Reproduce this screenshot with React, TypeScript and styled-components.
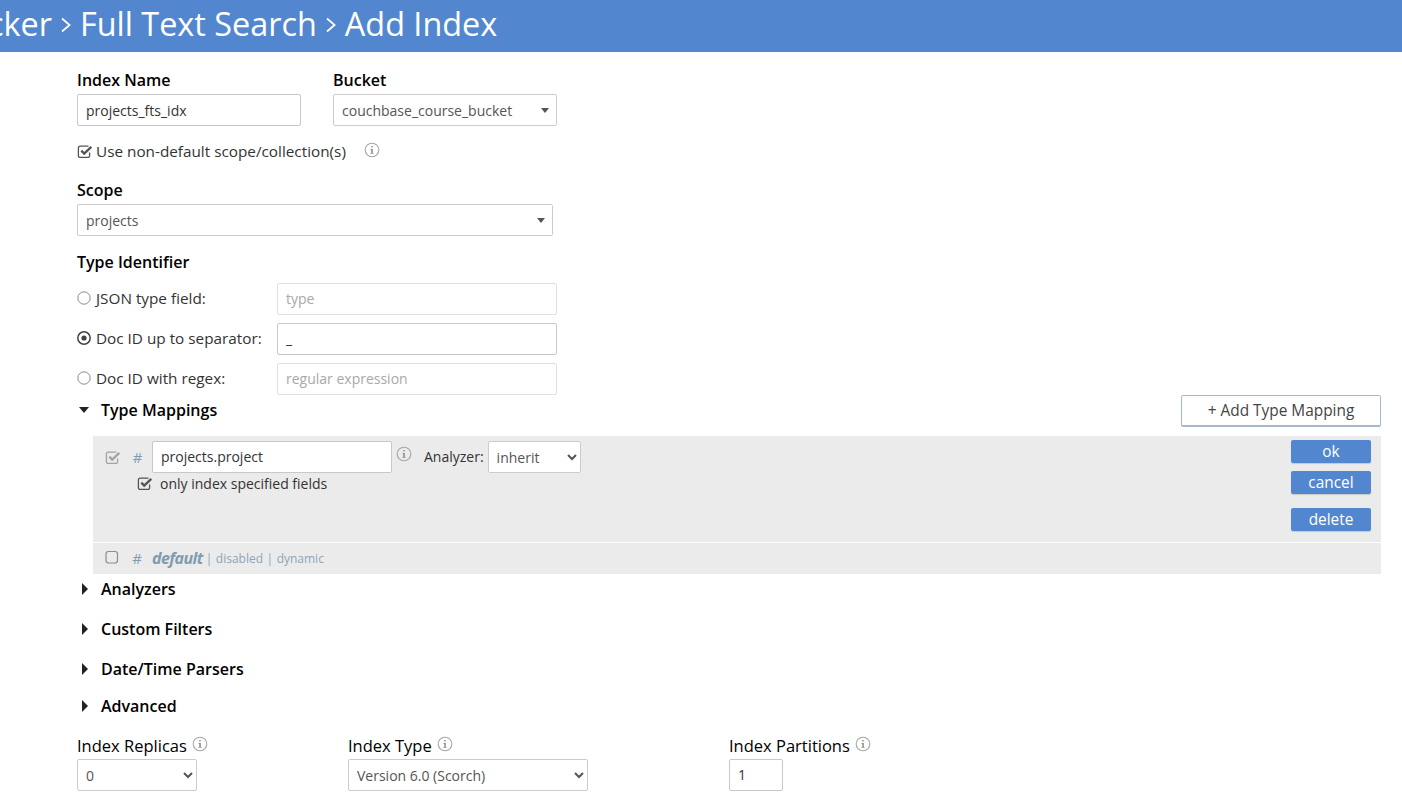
import { ReactNode } from "react";
import styled, { createGlobalStyle } from "styled-components";

const GlobalStyle = createGlobalStyle`
  html, body {
    margin: 0;
    padding: 0;
    background: #fff;
    overflow: hidden;
  }
  body {
    font-family: "Open Sans", "Liberation Sans", sans-serif;
    font-size: 14px;
    color: #333;
  }
  * {
    box-sizing: border-box;
  }
`;

const Page = styled.div`
  width: 1402px;
  height: 807px;
  overflow: hidden;
`;
const Header = styled.header`
  height: 52px;
  background-color: #5287d0;
  overflow: hidden;
  display: flex;
  align-items: flex-start;
`;
const Title = styled.h1`
  margin: -3px 0 0 -12px;
  font-size: 32.4px;
  font-weight: 400;
  line-height: 52px;
  color: #fff;
  white-space: nowrap;
  display: flex;
  align-items: center;
`;
const Crumb = styled.svg`
  width: 10px;
  height: 18px;
  margin: 3px 9px 0 9px;
`;
const Form = styled.main`
  padding: 18px 21px 0 77px;
  position: relative;
`;
const Label = styled.label`
  display: flex;
  align-items: flex-start;
  gap: 4px;
  height: 24px;
  font-size: 16px;
  line-height: 20px;
  font-weight: 600;
  color: #000;
`;
const Row = styled.div<{ $gap?: number }>`
  display: flex;
  gap: ${(p) => p.$gap ?? 0}px;
`;
const Field = styled.div<{ $width: number }>`
  width: ${(p) => p.$width}px;
  flex: none;
`;
const Input = styled.input<{ $width?: number; $strong?: boolean; $centered?: boolean }>`
  display: block;
  width: ${(p) => (p.$width ? `${p.$width}px` : "100%")};
  height: 32px;
  padding: 0 8px ${(p) => (p.$centered ? 0 : 2)}px;
  background: #fff;
  border: 1px solid ${(p) => (p.$strong ? "#c8c8c8" : "#e0e0e0")};
  border-radius: 2px;
  font: 14px "Open Sans", sans-serif;
  color: #333;
  &::placeholder {
    color: #a8a8a8;
    opacity: 1;
  }
`;
const SelectBox = styled.div<{ $width: number }>`
  position: relative;
  width: ${(p) => p.$width}px;
  height: 32px;
  padding: 0 8px;
  border: 1px solid #ccc;
  border-radius: 2px;
  font-size: 14px;
  line-height: 31px;
  color: #555;
  &::after {
    content: "";
    position: absolute;
    right: 7px;
    top: 13px;
    border-top: 5px solid #555;
    border-left: 4px solid transparent;
    border-right: 4px solid transparent;
  }
`;
const NativeSelect = styled.select<{ $width: number }>`
  display: block;
  width: ${(p) => p.$width}px;
  height: 32px;
  padding: 0 4px;
  background: #fff;
  border: 1px solid #ccc;
  border-radius: 2px;
  font: 14px "Open Sans", sans-serif;
  color: #555;
`;
const CheckLine = styled.div`
  display: flex;
  align-items: center;
  height: 24px;
  margin-top: 13px;
  color: #333;
  font-size: 15.3px;
  gap: 3px;
`;
const InfoSvg = styled.svg<{ $left?: number; $up?: number }>`
  width: 16px;
  height: 16px;
  flex: none;
  margin-left: ${(p) => p.$left ?? 0}px;
  margin-top: ${(p) => -(p.$up ?? 0)}px;
`;
const ScopeLabel = styled(Label)`
  margin-top: 17px;
`;
const TypeHeading = styled(Label)`
  margin-top: 16px;
  height: 31px;
`;
const RadioGroup = styled.div`
  display: flex;
  flex-direction: column;
  gap: 8px;
`;
const RadioRow = styled.div`
  display: flex;
  align-items: center;
  height: 32px;
`;
const RadioLabel = styled.span`
  display: flex;
  align-items: center;
  width: 200px;
  gap: 5px;
  padding-bottom: 2px;
  font-size: 15.3px;
  color: #333;
`;
const Section = styled.div<{ $height: number }>`
  display: flex;
  align-items: center;
  height: ${(p) => p.$height}px;
  font-size: 16px;
  font-weight: 600;
  color: #000;
`;
const SectionToggle = styled.i<{ $open?: boolean }>`
  display: block;
  width: 24px;
  flex: none;
  &::before {
    content: "";
    display: block;
    width: 0;
    ${(p) =>
      p.$open
        ? `margin-left: 2px;
           border-top: 6px solid #222;
           border-left: 5.5px solid transparent;
           border-right: 5.5px solid transparent;`
        : `margin-left: 5px;
           border-left: 6.5px solid #222;
           border-top: 6px solid transparent;
           border-bottom: 6px solid transparent;`}
  }
`;
const MappingsHead = styled.div`
  display: flex;
  justify-content: space-between;
  align-items: flex-start;
  height: 32px;
  margin-bottom: 9px;
`;
const OutlineButton = styled.button`
  width: 200px;
  height: 32px;
  background: #fff;
  border: 1px solid #a9b8c9;
  border-bottom-width: 2px;
  border-radius: 2px;
  font: 15.4px "Open Sans", sans-serif;
  color: #444;
`;
const Mappings = styled.div`
  margin-left: 16px;
`;
const MappingEdit = styled.div`
  height: 106px;
  background: #ebebeb;
  margin-bottom: 1px;
  padding: 4px 10px 0 12px;
  display: flex;
  justify-content: space-between;
`;
const MappingMain = styled.div`
  padding-top: 1px;
`;
const MappingTop = styled.div`
  display: flex;
  align-items: center;
`;
const Hash = styled.span<{ $width: number }>`
  width: ${(p) => p.$width}px;
  text-align: center;
  font-size: 15px;
  color: #7f9cb0;
  padding-left: 2px;
`;
const AnalyzerLabel = styled.span`
  margin: 0 4px 2px 12px;
  font-size: 14px;
`;
const OnlyLine = styled.div`
  display: flex;
  align-items: center;
  gap: 7px;
  height: 20px;
  margin: 0 0 0 32px;
  font-size: 14px;
`;
const Buttons = styled.div`
  display: flex;
  flex-direction: column;
  align-items: center;
  width: 80px;
`;
const BlueButton = styled.button<{ $top?: number }>`
  width: 80px;
  height: 23px;
  padding: 0;
  margin-top: ${(p) => p.$top ?? 0}px;
  background: #5287d0;
  border: 0;
  border-radius: 2px;
  box-shadow: 0 1px 1px rgba(0, 0, 0, 0.15);
  font: 15.4px "Open Sans", sans-serif;
  line-height: 20px;
  color: #fff;
`;
const MappingRow = styled.div`
  height: 31px;
  background: #ebebeb;
  padding: 0 0 2px 12px;
  display: flex;
  align-items: center;
`;
const MappingName = styled.span`
  font-size: 16px;
  font-weight: 700;
  font-style: italic;
  letter-spacing: -0.6px;
  color: #7f9cb0;
  margin-right: 3px;
`;
const MappingMeta = styled.span`
  font-size: 12px;
  word-spacing: 0.4px;
  color: #8ea6b8;
  padding-top: 2px;
`;
const Footer = styled.div`
  display: flex;
  margin-top: 7px;
`;
const FooterLabel = styled(Label)`
  padding-top: 1px;
  gap: 5px;
  font-size: 16.5px;
  font-weight: 500;
`;

function Info({ left, up }: { left?: number; up?: number }) {
  return (
    <InfoSvg $left={left} $up={up} viewBox="0 0 16 16" fill="none">
      <circle cx="8" cy="8" r="6.8" stroke="#a6a6a6" strokeWidth="1.1" />
      <path
        d="M7.3 4.1h1.4v1.5H7.3zM6.6 7h2.2v3.9h.8v.9H6.4v-.9h.9V7.9h-.7z"
        fill="#8a8a8a"
      />
    </InfoSvg>
  );
}

function CheckBox({ color = "#555" }: { color?: string }) {
  return (
    <svg width="16" height="15" viewBox="0 0 16 15" fill="none">
      <path
        d="M11.5 2.2H3a1.6 1.6 0 0 0-1.6 1.6v8A1.6 1.6 0 0 0 3 13.4h8a1.6 1.6 0 0 0 1.6-1.6V8.6"
        stroke={color}
        strokeWidth="1.3"
      />
      <path d="M4.3 6.6 7.2 9.6 14.3 2.8" stroke={color} strokeWidth="2.3" />
    </svg>
  );
}

function EmptyBox() {
  return (
    <svg width="15" height="15" viewBox="0 0 15 15" fill="none">
      <rect x="1" y="1.5" width="11.5" height="11.5" rx="2.4" stroke="#8d8d8d" strokeWidth="1.2" />
    </svg>
  );
}

function Radio({ on }: { on?: boolean }) {
  return (
    <svg width="14" height="14" viewBox="0 0 14 14" fill="none">
      <circle cx="7" cy="7" r="6.2" stroke={on ? "#444" : "#8a8a8a"} strokeWidth={on ? 1.5 : 1} />
      {on && <circle cx="7" cy="7" r="2.6" fill="#444" />}
    </svg>
  );
}

function Chevron() {
  return (
    <Crumb viewBox="0 0 10 18" fill="none">
      <path d="M1 2.5 8.6 9 1 15.5" stroke="#fff" strokeWidth="1.7" />
    </Crumb>
  );
}

function Collapsed({ height, children }: { height: number; children: ReactNode }) {
  return (
    <Section $height={height}>
      <SectionToggle />
      {children}
    </Section>
  );
}

export default function App() {
  return (
    <Page>
      <GlobalStyle />
      <Header>
        <Title>
          cker
          <Chevron />
          Full Text Search
          <Chevron />
          Add Index
        </Title>
      </Header>
      <Form>
        <Row $gap={32}>
          <Field $width={224}>
            <Label>Index Name</Label>
            <Input $strong $centered defaultValue="projects_fts_idx" />
          </Field>
          <Field $width={224}>
            <Label>Bucket</Label>
            <SelectBox $width={224}>couchbase_course_bucket</SelectBox>
          </Field>
        </Row>
        <CheckLine>
          <CheckBox />
          Use non-default scope/collection(s)
          <Info left={15} up={2} />
        </CheckLine>
        <ScopeLabel>Scope</ScopeLabel>
        <SelectBox $width={476}>projects</SelectBox>
        <TypeHeading>Type Identifier</TypeHeading>
        <RadioGroup>
          <RadioRow>
            <RadioLabel>
              <Radio />
              JSON type field:
            </RadioLabel>
            <Input $width={280} placeholder="type" />
          </RadioRow>
          <RadioRow>
            <RadioLabel>
              <Radio on />
              Doc ID up to separator:
            </RadioLabel>
            <Input $width={280} $strong defaultValue="_" />
          </RadioRow>
          <RadioRow>
            <RadioLabel>
              <Radio />
              Doc ID with regex:
            </RadioLabel>
            <Input $width={280} placeholder="regular expression" />
          </RadioRow>
        </RadioGroup>
        <MappingsHead>
          <Section $height={30}>
            <SectionToggle $open />
            Type Mappings
          </Section>
          <OutlineButton>+ Add Type Mapping</OutlineButton>
        </MappingsHead>
        <Mappings>
          <MappingEdit>
            <MappingMain>
              <MappingTop>
                <CheckBox color="#a3a3a3" />
                <Hash $width={31}>#</Hash>
                <Input $width={240} $strong defaultValue="projects.project" />
                <Info left={4} up={6} />
                <AnalyzerLabel>Analyzer:</AnalyzerLabel>
                <NativeSelect $width={93} defaultValue="inherit">
                  <option value="inherit">inherit</option>
                </NativeSelect>
              </MappingTop>
              <OnlyLine>
                <CheckBox />
                only index specified fields
              </OnlyLine>
            </MappingMain>
            <Buttons>
              <BlueButton>ok</BlueButton>
              <BlueButton $top={8}>cancel</BlueButton>
              <BlueButton $top={14}>delete</BlueButton>
            </Buttons>
          </MappingEdit>
          <MappingRow>
            <EmptyBox />
            <Hash $width={32}>#</Hash>
            <MappingName>default</MappingName>
            <MappingMeta>| disabled | dynamic</MappingMeta>
          </MappingRow>
        </Mappings>
        <Collapsed height={30}>Analyzers</Collapsed>
        <Collapsed height={50}>Custom Filters</Collapsed>
        <Collapsed height={30}>Date/Time Parsers</Collapsed>
        <Collapsed height={44}>Advanced</Collapsed>
        <Footer>
          <Field $width={271}>
            <FooterLabel>
              Index Replicas
              <Info />
            </FooterLabel>
            <NativeSelect $width={120} defaultValue="0">
              <option value="0">0</option>
            </NativeSelect>
          </Field>
          <Field $width={381}>
            <FooterLabel>
              Index Type
              <Info />
            </FooterLabel>
            <NativeSelect $width={240} defaultValue="scorch">
              <option value="scorch">Version 6.0 (Scorch)</option>
            </NativeSelect>
          </Field>
          <Field $width={200}>
            <FooterLabel>
              Index Partitions
              <Info />
            </FooterLabel>
            <Input $width={54} $strong defaultValue="1" />
          </Field>
        </Footer>
      </Form>
    </Page>
  );
}
